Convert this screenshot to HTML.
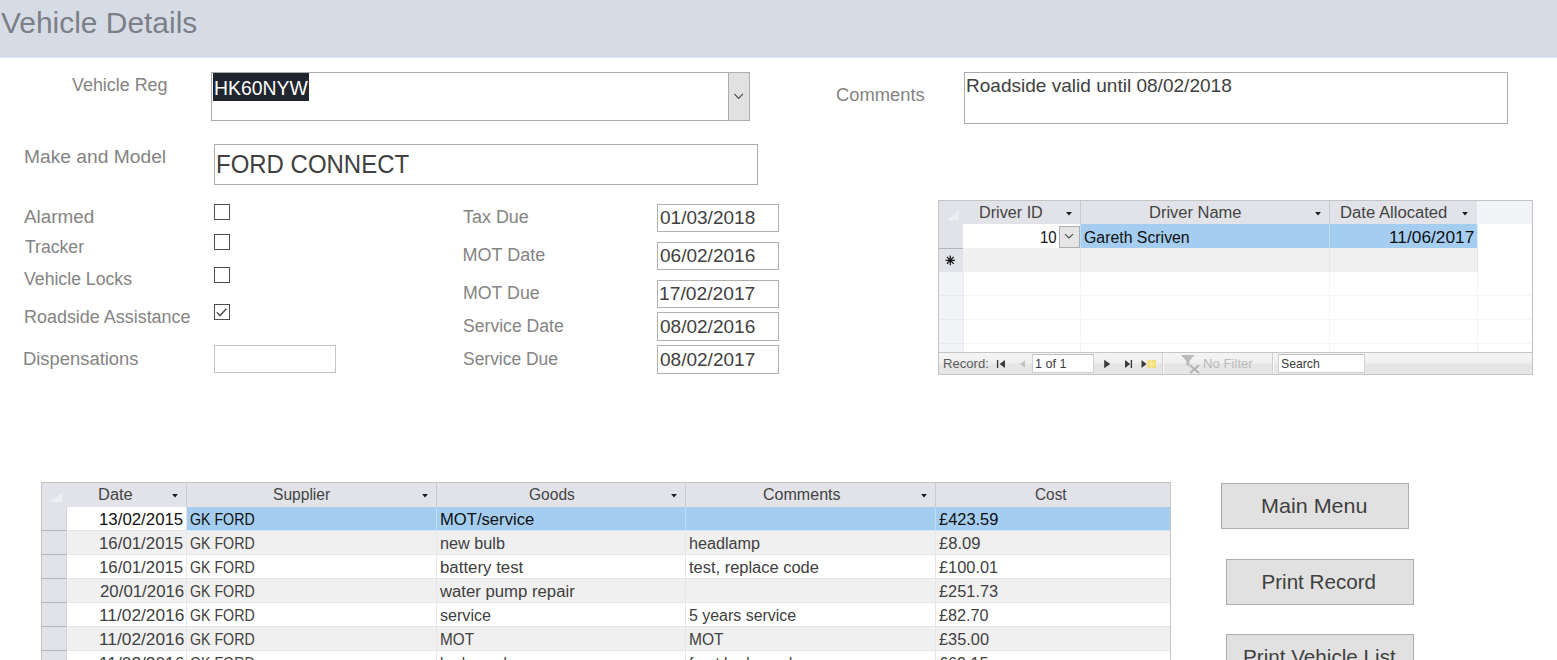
<!DOCTYPE html>
<html lang="en"><head><meta charset="utf-8"><title>Vehicle Details</title>
<style>
html,body{margin:0;padding:0;background:#fff}
body{width:1557px;height:660px;overflow:hidden;font-family:"Liberation Sans",Arial,sans-serif}
#page{position:relative;width:1557px;height:660px;overflow:hidden;background:#fff}
#page div,#page svg{position:absolute;box-sizing:border-box}
.t{position:absolute;white-space:nowrap;line-height:1;transform-origin:0 0;font-family:"Liberation Sans",Arial,sans-serif}
.hdr{left:0;top:0;width:1557px;height:57px;background:#d6dce6}
.hdr2{left:0;top:57px;width:1557px;height:1px;background:#e1e6ee}
.box{background:#fff;border:1px solid #ababab}
.btn{background:#e1e1e1;border:1px solid #adadad}
.cb{width:16px;height:16px;border:1px solid #4d4d4d;background:#fff}
.sel{background:#a5cdf0}
.gh{background:#e1e3e8}
.alt{background:#f0f0f0}

</style></head>
<body>
<div id="page">
<div class="hdr" style="left:0px;top:0px;width:1557px;height:57px;"></div>
<div class="hdr2" style="left:0px;top:57px;width:1557px;height:1px;"></div>
<div class="box" style="left:211px;top:72px;width:539px;height:49px;"></div>
<div class="" style="left:213px;top:73px;width:95.6px;height:27.6px;background:#20252f"></div>
<div class="btn" style="left:728px;top:72px;width:22px;height:49px;"></div>
<svg style="left:730px;top:88px" width="18" height="16" viewBox="0 0 18 16"><path d="M4.3 5.9 L8.6 10.5 L12.9 5.9" fill="none" stroke="#484848" stroke-width="1.15"/></svg>
<div class="box" style="left:214px;top:144px;width:544px;height:41px;"></div>
<div class="cb" style="left:214px;top:204px;width:16px;height:16px;"></div>
<div class="cb" style="left:214px;top:234px;width:16px;height:16px;"></div>
<div class="cb" style="left:214px;top:267px;width:16px;height:16px;"></div>
<div class="cb" style="left:214px;top:303.5px;width:16px;height:16px;"></div>
<svg style="left:214px;top:303.5px" width="16" height="16" viewBox="0 0 16 16"><path d="M2.9 8.3 L5.9 11.6 L12.4 4.8" fill="none" stroke="#4d4d4d" stroke-width="1.4"/></svg>
<div class="box" style="left:214px;top:345px;width:122px;height:28px;border-color:#c3c3c3"></div>
<div class="box" style="left:657px;top:204px;width:122px;height:28px;border-color:#b0b0b0"></div>
<div class="box" style="left:657px;top:242px;width:122px;height:28px;border-color:#b0b0b0"></div>
<div class="box" style="left:657px;top:280px;width:122px;height:28px;border-color:#b0b0b0"></div>
<div class="box" style="left:657px;top:312px;width:122px;height:28.5px;border-color:#b0b0b0"></div>
<div class="box" style="left:657px;top:345px;width:122px;height:28.5px;border-color:#b0b0b0"></div>
<div class="box" style="left:964px;top:72px;width:544px;height:52px;"></div>
<div class="" style="left:938px;top:200px;width:595px;height:175px;background:#fff;border:1px solid #c4c4c4"></div>
<div class="gh" style="left:939px;top:201px;width:538px;height:23px;"></div>
<div class="" style="left:1477px;top:201px;width:55px;height:23px;background:#f3f4f8"></div>
<svg style="left:946px;top:210px" width="14" height="11" viewBox="0 0 14 11"><path d="M13 0.5 L13 10 L1 10 Z" fill="#eceef2"/></svg>
<div class="gh" style="left:939px;top:224px;width:23.5px;height:48px;"></div>
<div class="" style="left:939px;top:272px;width:23.5px;height:80px;background:#f1f3f7"></div>
<div class="" style="left:963px;top:224px;width:117px;height:24px;background:#fff"></div>
<div class="sel" style="left:1080.5px;top:224px;width:396px;height:24px;"></div>
<div class="btn" style="left:1059px;top:226px;width:21px;height:21.5px;background:#e5e5e5"></div>
<svg style="left:1061px;top:230px" width="16" height="12" viewBox="0 0 16 12"><path d="M4 4.1 L8 8 L12 4.1" fill="none" stroke="#505050" stroke-width="1.2"/></svg>
<div class="alt" style="left:963px;top:248px;width:513.5px;height:24px;"></div>
<div class="" style="left:939px;top:248px;width:23.5px;height:1px;background:#b3b6bc"></div>
<svg style="left:944px;top:254px" width="13" height="13" viewBox="0 0 13 13"><path d="M6.3 1.5 V11.2 M1.6 6.35 H11 M2.9 2.9 L9.7 9.8 M9.7 2.9 L2.9 9.8" stroke="#151515" stroke-width="1.25" fill="none"/></svg>
<div class="" style="left:1080px;top:201px;width:1px;height:23px;background:#c9cacd"></div>
<div class="" style="left:1080px;top:224px;width:1px;height:24px;background:#c2def6"></div>
<div class="" style="left:1080px;top:248px;width:1px;height:24px;background:#e6e6e8"></div>
<div class="" style="left:1080px;top:272px;width:1px;height:80px;background:#f5f5f5"></div>
<div class="" style="left:1329px;top:201px;width:1px;height:23px;background:#c9cacd"></div>
<div class="" style="left:1329px;top:224px;width:1px;height:24px;background:#c2def6"></div>
<div class="" style="left:1329px;top:248px;width:1px;height:24px;background:#e6e6e8"></div>
<div class="" style="left:1329px;top:272px;width:1px;height:80px;background:#f5f5f5"></div>
<div class="" style="left:1476.5px;top:224px;width:1px;height:24px;background:#e4eef8"></div>
<div class="" style="left:1476.5px;top:248px;width:1px;height:24px;background:#e6e6e8"></div>
<div class="" style="left:1476.5px;top:272px;width:1px;height:80px;background:#f5f5f5"></div>
<div class="" style="left:963px;top:295px;width:569px;height:1px;background:#f5f5f5"></div>
<div class="" style="left:939px;top:295px;width:24px;height:1px;background:#e6e9ee"></div>
<div class="" style="left:963px;top:319px;width:569px;height:1px;background:#f5f5f5"></div>
<div class="" style="left:939px;top:319px;width:24px;height:1px;background:#e6e9ee"></div>
<div class="" style="left:963px;top:343px;width:569px;height:1px;background:#f5f5f5"></div>
<div class="" style="left:939px;top:343px;width:24px;height:1px;background:#e6e9ee"></div>
<div class="" style="left:962.5px;top:272px;width:1px;height:80px;background:#e9ebef"></div>
<svg style="left:1065px;top:210.8px" width="8" height="6" viewBox="0 0 8 6"><path d="M1.1 1 L6.9 1 L4 4.5 Z" fill="#1a1a1a"/></svg>
<svg style="left:1314px;top:210.8px" width="8" height="6" viewBox="0 0 8 6"><path d="M1.1 1 L6.9 1 L4 4.5 Z" fill="#1a1a1a"/></svg>
<svg style="left:1461px;top:210.8px" width="8" height="6" viewBox="0 0 8 6"><path d="M1.1 1 L6.9 1 L4 4.5 Z" fill="#1a1a1a"/></svg>
<div class="" style="left:939px;top:352px;width:593px;height:22px;background:linear-gradient(#f4f4f4 0,#f0f0f0 45%,#e5e5e5 55%,#e7e7e7 100%);border-top:1px solid #c6c6c6"></div>
<div class="" style="left:1032px;top:353.5px;width:61.5px;height:19.5px;background:#fff;border:1px solid #d0d0d0;border-top-color:#bdbdbd"></div>
<div class="" style="left:1278px;top:353.5px;width:87px;height:19.5px;background:#fff;border:1px solid #d0d0d0;border-top-color:#bdbdbd"></div>
<div class="" style="left:1162px;top:353px;width:1px;height:21px;background:#cfcfcf"></div>
<div class="" style="left:1163px;top:353px;width:1px;height:21px;background:#fafafa"></div>
<div class="" style="left:1272px;top:353px;width:1px;height:21px;background:#cfcfcf"></div>
<div class="" style="left:1273px;top:353px;width:1px;height:21px;background:#fafafa"></div>
<svg style="left:996px;top:358px" width="12" height="12" viewBox="0 0 12 12"><path d="M1.6 2 V10" stroke="#3c3c3c" stroke-width="1.4"/><path d="M9 2 L9 10 L3.6 6 Z" fill="#3c3c3c"/></svg>
<svg style="left:1017px;top:358px" width="12" height="12" viewBox="0 0 12 12"><path d="M8 2.3 L8 9.7 L3 6 Z" fill="#c2c2c2"/></svg>
<svg style="left:1101px;top:358px" width="12" height="12" viewBox="0 0 12 12"><path d="M3.2 1.8 L3.2 10.2 L9.2 6 Z" fill="#3c3c3c"/></svg>
<svg style="left:1123px;top:358px" width="12" height="12" viewBox="0 0 12 12"><path d="M2 2 L2 10 L7.2 6 Z" fill="#3c3c3c"/><path d="M8.4 2 V10" stroke="#3c3c3c" stroke-width="1.4"/></svg>
<svg style="left:1140px;top:357px" width="18" height="14" viewBox="0 0 18 14"><path d="M1.5 3 L1.5 11 L6.6 7 Z" fill="#3c3c3c"/><rect x="7.5" y="3.2" width="8.5" height="7.6" fill="#f3d95e"/><path d="M11.7 3 V11 M7.5 7 H16 M9 4.2 L14.5 9.8 M14.5 4.2 L9 9.8" stroke="#fbeeb0" stroke-width="1"/></svg>
<svg style="left:1180px;top:353px" width="22" height="22" viewBox="0 0 22 22"><path d="M1 2 H14.5 L9.4 8 V13.5 L6.4 12 V8 Z" fill="#b9b9b9"/><path d="M10 12.2 L19 20 M19 12.2 L10 20" stroke="#b0b0b0" stroke-width="1.8"/></svg>
<div class="" style="left:41px;top:482px;width:1130px;height:179px;background:#fff;border:1px solid #c4c4c4;border-bottom:none"></div>
<div class="gh" style="left:42px;top:483px;width:1128px;height:23.5px;"></div>
<svg style="left:49px;top:492px" width="15" height="11" viewBox="0 0 15 11"><path d="M13.5 0.5 L13.5 10 L0.5 10 Z" fill="#eceef2"/></svg>
<div class="gh" style="left:42px;top:506.5px;width:23.5px;height:154.5px;"></div>
<div class="" style="left:66px;top:506.5px;width:120px;height:24px;background:#fff"></div>
<div class="sel" style="left:186.5px;top:506.5px;width:983.5px;height:24px;"></div>
<div class="alt" style="left:66px;top:530.5px;width:1104px;height:24px;"></div>
<div class="" style="left:42px;top:530px;width:23.5px;height:1px;background:#b3b6bc"></div>
<div class="" style="left:66px;top:530px;width:1104px;height:1px;background:#e6e6e6"></div>
<div class="" style="left:42px;top:554px;width:23.5px;height:1px;background:#b3b6bc"></div>
<div class="" style="left:66px;top:554px;width:1104px;height:1px;background:#e6e6e6"></div>
<div class="alt" style="left:66px;top:578.5px;width:1104px;height:24px;"></div>
<div class="" style="left:42px;top:578px;width:23.5px;height:1px;background:#b3b6bc"></div>
<div class="" style="left:66px;top:578px;width:1104px;height:1px;background:#e6e6e6"></div>
<div class="" style="left:42px;top:602px;width:23.5px;height:1px;background:#b3b6bc"></div>
<div class="" style="left:66px;top:602px;width:1104px;height:1px;background:#e6e6e6"></div>
<div class="alt" style="left:66px;top:626.5px;width:1104px;height:24px;"></div>
<div class="" style="left:42px;top:626px;width:23.5px;height:1px;background:#b3b6bc"></div>
<div class="" style="left:66px;top:626px;width:1104px;height:1px;background:#e6e6e6"></div>
<div class="" style="left:42px;top:650px;width:23.5px;height:1px;background:#b3b6bc"></div>
<div class="" style="left:66px;top:650px;width:1104px;height:1px;background:#e6e6e6"></div>
<div class="" style="left:186px;top:483px;width:1px;height:23.5px;background:#c9cacd"></div>
<div class="" style="left:186px;top:506.5px;width:1px;height:154.5px;background:#e7e7e8"></div>
<div class="" style="left:436px;top:483px;width:1px;height:23.5px;background:#c9cacd"></div>
<div class="" style="left:436px;top:506.5px;width:1px;height:154.5px;background:#e7e7e8"></div>
<div class="" style="left:436px;top:506.5px;width:1px;height:24px;background:#c2def6"></div>
<div class="" style="left:685px;top:483px;width:1px;height:23.5px;background:#c9cacd"></div>
<div class="" style="left:685px;top:506.5px;width:1px;height:154.5px;background:#e7e7e8"></div>
<div class="" style="left:685px;top:506.5px;width:1px;height:24px;background:#c2def6"></div>
<div class="" style="left:935px;top:483px;width:1px;height:23.5px;background:#c9cacd"></div>
<div class="" style="left:935px;top:506.5px;width:1px;height:154.5px;background:#e7e7e8"></div>
<div class="" style="left:935px;top:506.5px;width:1px;height:24px;background:#c2def6"></div>
<div class="" style="left:186.5px;top:529.5px;width:983.5px;height:1px;background:#d3e7f8"></div>
<div class="" style="left:65.5px;top:506.5px;width:1px;height:154.5px;background:#d0d2d6"></div>
<svg style="left:170.5px;top:493px" width="8" height="6" viewBox="0 0 8 6"><path d="M1.1 1 L6.9 1 L4 4.5 Z" fill="#1a1a1a"/></svg>
<svg style="left:420.5px;top:493px" width="8" height="6" viewBox="0 0 8 6"><path d="M1.1 1 L6.9 1 L4 4.5 Z" fill="#1a1a1a"/></svg>
<svg style="left:670px;top:493px" width="8" height="6" viewBox="0 0 8 6"><path d="M1.1 1 L6.9 1 L4 4.5 Z" fill="#1a1a1a"/></svg>
<svg style="left:919.8px;top:493px" width="8" height="6" viewBox="0 0 8 6"><path d="M1.1 1 L6.9 1 L4 4.5 Z" fill="#1a1a1a"/></svg>
<div class="btn" style="left:1221px;top:483px;width:188px;height:46px;"></div>
<div class="btn" style="left:1226px;top:559px;width:188px;height:46px;"></div>
<div class="btn" style="left:1226px;top:634px;width:188px;height:46px;"></div>
<!-- text layer -->
<span class="t" style="left:0.50px;top:7.75px;font-size:29.5px;color:#7c7f86;transform:scaleX(1.0143);">Vehicle Details</span>
<span class="t" style="left:71.50px;top:76.25px;font-size:18px;color:#848484;transform:scaleX(0.9942);">Vehicle Reg</span>
<span class="t" style="left:23.93px;top:147.60px;font-size:18px;color:#848484;transform:scaleX(1.0681);">Make and Model</span>
<span class="t" style="left:23.75px;top:207.50px;font-size:18px;color:#848484;transform:scaleX(1.0490);">Alarmed</span>
<span class="t" style="left:25.00px;top:237.50px;font-size:18px;color:#848484;transform:scaleX(0.9777);">Tracker</span>
<span class="t" style="left:24.00px;top:270.00px;font-size:18px;color:#848484;transform:scaleX(0.9812);">Vehicle Locks</span>
<span class="t" style="left:23.50px;top:307.75px;font-size:18px;color:#848484;transform:scaleX(0.9965);">Roadside Assistance</span>
<span class="t" style="left:23.48px;top:349.50px;font-size:18px;color:#848484;transform:scaleX(1.0218);">Dispensations</span>
<span class="t" style="left:463.00px;top:207.75px;font-size:18px;color:#848484;transform:scaleX(0.9959);">Tax Due</span>
<span class="t" style="left:462.50px;top:245.75px;font-size:18px;color:#848484;transform:scaleX(1.0000);">MOT Date</span>
<span class="t" style="left:462.51px;top:283.50px;font-size:18px;color:#848484;transform:scaleX(0.9870);">MOT Due</span>
<span class="t" style="left:463.00px;top:316.75px;font-size:18px;color:#848484;transform:scaleX(0.9778);">Service Date</span>
<span class="t" style="left:463.00px;top:349.50px;font-size:18px;color:#848484;transform:scaleX(0.9691);">Service Due</span>
<span class="t" style="left:835.50px;top:85.75px;font-size:18px;color:#848484;transform:scaleX(1.0199);">Comments</span>
<span class="t" style="left:213.81px;top:78.70px;font-size:19.6px;color:#ffffff;transform:scaleX(0.9912);">HK60NYW</span>
<span class="t" style="left:216.18px;top:151.40px;font-size:26.4px;color:#404040;transform:scaleX(0.9085);">FORD CONNECT</span>
<span class="t" style="left:659.60px;top:208.85px;font-size:18.6px;color:#404040;transform:scaleX(1.0235);">01/03/2018</span>
<span class="t" style="left:659.60px;top:246.85px;font-size:18.6px;color:#404040;transform:scaleX(1.0235);">06/02/2016</span>
<span class="t" style="left:658.57px;top:284.75px;font-size:18.6px;color:#404040;transform:scaleX(1.0347);">17/02/2017</span>
<span class="t" style="left:659.60px;top:317.50px;font-size:18.6px;color:#404040;transform:scaleX(1.0235);">08/02/2016</span>
<span class="t" style="left:659.60px;top:350.50px;font-size:18.6px;color:#404040;transform:scaleX(1.0235);">08/02/2017</span>
<span class="t" style="left:966.13px;top:77.60px;font-size:17.8px;color:#404040;transform:scaleX(1.0710);">Roadside valid until 08/02/2018</span>
<span class="t" style="left:979.46px;top:205.00px;font-size:15.6px;color:#444444;transform:scaleX(1.0374);">Driver ID</span>
<span class="t" style="left:1148.94px;top:205.00px;font-size:15.6px;color:#444444;transform:scaleX(1.0572);">Driver Name</span>
<span class="t" style="left:1339.93px;top:205.00px;font-size:15.6px;color:#444444;transform:scaleX(1.0677);">Date Allocated</span>
<span class="t" style="left:1039.84px;top:229.50px;font-size:15.6px;color:#101010;transform:scaleX(0.9597);">10</span>
<span class="t" style="left:1084.00px;top:229.50px;font-size:15.6px;color:#101010;transform:scaleX(1.0162);">Gareth Scriven</span>
<span class="t" style="left:1389.39px;top:229.50px;font-size:15.6px;color:#101010;transform:scaleX(1.1102);">11/06/2017</span>
<span class="t" style="left:943.46px;top:358.00px;font-size:12.6px;color:#5a5a5a;transform:scaleX(1.0388);">Record:</span>
<span class="t" style="left:1035.00px;top:358.20px;font-size:12.6px;color:#3c3c3c;transform:scaleX(0.9998);">1 of 1</span>
<span class="t" style="left:1202.95px;top:358.20px;font-size:12.6px;color:#bbbbbb;transform:scaleX(1.0455);">No Filter</span>
<span class="t" style="left:1280.50px;top:358.20px;font-size:12.6px;color:#3c3c3c;transform:scaleX(0.9712);">Search</span>
<span class="t" style="left:98.44px;top:487.00px;font-size:15.6px;color:#444444;transform:scaleX(1.0555);">Date</span>
<span class="t" style="left:273.00px;top:487.00px;font-size:15.6px;color:#444444;transform:scaleX(0.9997);">Supplier</span>
<span class="t" style="left:529.00px;top:487.00px;font-size:15.6px;color:#444444;transform:scaleX(0.9968);">Goods</span>
<span class="t" style="left:762.75px;top:487.00px;font-size:15.6px;color:#444444;transform:scaleX(1.0286);">Comments</span>
<span class="t" style="left:1035.00px;top:487.00px;font-size:15.6px;color:#444444;transform:scaleX(0.9853);">Cost</span>
<span class="t" style="left:98.92px;top:512.20px;font-size:15.6px;color:#101010;transform:scaleX(1.0792);">13/02/2015</span>
<span class="t" style="left:189.60px;top:512.20px;font-size:15.6px;color:#101010;transform:scaleX(0.9099);">GK FORD</span>
<span class="t" style="left:439.50px;top:512.20px;font-size:15.6px;color:#101010;transform:scaleX(1.0662);">MOT/service</span>
<span class="t" style="left:938.60px;top:512.20px;font-size:15.6px;color:#101010;transform:scaleX(1.0531);">£423.59</span>
<span class="t" style="left:98.92px;top:536.20px;font-size:15.6px;color:#404040;transform:scaleX(1.0792);">16/01/2015</span>
<span class="t" style="left:189.60px;top:536.20px;font-size:15.6px;color:#404040;transform:scaleX(0.9099);">GK FORD</span>
<span class="t" style="left:439.50px;top:536.20px;font-size:15.6px;color:#404040;transform:scaleX(1.0399);">new bulb</span>
<span class="t" style="left:688.80px;top:536.20px;font-size:15.6px;color:#404040;transform:scaleX(1.0383);">headlamp</span>
<span class="t" style="left:938.60px;top:536.20px;font-size:15.6px;color:#404040;transform:scaleX(1.0665);">£8.09</span>
<span class="t" style="left:98.92px;top:560.20px;font-size:15.6px;color:#404040;transform:scaleX(1.0792);">16/01/2015</span>
<span class="t" style="left:189.60px;top:560.20px;font-size:15.6px;color:#404040;transform:scaleX(0.9099);">GK FORD</span>
<span class="t" style="left:439.50px;top:560.20px;font-size:15.6px;color:#404040;transform:scaleX(1.0796);">battery test</span>
<span class="t" style="left:688.80px;top:560.20px;font-size:15.6px;color:#404040;transform:scaleX(1.0554);">test, replace code</span>
<span class="t" style="left:938.60px;top:560.20px;font-size:15.6px;color:#404040;transform:scaleX(1.0486);">£100.01</span>
<span class="t" style="left:100.00px;top:584.20px;font-size:15.6px;color:#404040;transform:scaleX(1.0792);">20/01/2016</span>
<span class="t" style="left:189.60px;top:584.20px;font-size:15.6px;color:#404040;transform:scaleX(0.9099);">GK FORD</span>
<span class="t" style="left:439.50px;top:584.20px;font-size:15.6px;color:#404040;transform:scaleX(1.0719);">water pump repair</span>
<span class="t" style="left:938.60px;top:584.20px;font-size:15.6px;color:#404040;transform:scaleX(1.0486);">£251.73</span>
<span class="t" style="left:98.89px;top:608.20px;font-size:15.6px;color:#404040;transform:scaleX(1.1102);">11/02/2016</span>
<span class="t" style="left:189.60px;top:608.20px;font-size:15.6px;color:#404040;transform:scaleX(0.9099);">GK FORD</span>
<span class="t" style="left:439.50px;top:608.20px;font-size:15.6px;color:#404040;transform:scaleX(1.0314);">service</span>
<span class="t" style="left:688.80px;top:608.20px;font-size:15.6px;color:#404040;transform:scaleX(1.0217);">5 years service</span>
<span class="t" style="left:938.60px;top:608.20px;font-size:15.6px;color:#404040;transform:scaleX(1.0391);">£82.70</span>
<span class="t" style="left:98.89px;top:632.20px;font-size:15.6px;color:#404040;transform:scaleX(1.1102);">11/02/2016</span>
<span class="t" style="left:189.60px;top:632.20px;font-size:15.6px;color:#404040;transform:scaleX(0.9099);">GK FORD</span>
<span class="t" style="left:439.50px;top:632.20px;font-size:15.6px;color:#404040;transform:scaleX(0.9824);">MOT</span>
<span class="t" style="left:688.80px;top:632.20px;font-size:15.6px;color:#404040;transform:scaleX(0.9966);">MOT</span>
<span class="t" style="left:938.60px;top:632.20px;font-size:15.6px;color:#404040;transform:scaleX(1.0495);">£35.00</span>
<span class="t" style="left:98.89px;top:656.20px;font-size:15.6px;color:#404040;transform:scaleX(1.1102);">11/02/2016</span>
<span class="t" style="left:189.60px;top:656.20px;font-size:15.6px;color:#404040;transform:scaleX(0.9099);">GK FORD</span>
<span class="t" style="left:439.50px;top:656.20px;font-size:15.6px;color:#404040;transform:scaleX(0.9631);">brake pads</span>
<span class="t" style="left:688.80px;top:656.20px;font-size:15.6px;color:#404040;transform:scaleX(0.9850);">front brake pads</span>
<span class="t" style="left:938.60px;top:656.20px;font-size:15.6px;color:#404040;transform:scaleX(1.0391);">£69.15</span>
<span class="t" style="left:1260.95px;top:496.00px;font-size:20.6px;color:#404040;transform:scaleX(1.0456);">Main Menu</span>
<span class="t" style="left:1261.50px;top:572.00px;font-size:20.6px;color:#404040;transform:scaleX(1.0000);">Print Record</span>
<span class="t" style="left:1242.50px;top:647.00px;font-size:20.6px;color:#404040;transform:scaleX(1.0032);">Print Vehicle List</span>
</div>
</body></html>
